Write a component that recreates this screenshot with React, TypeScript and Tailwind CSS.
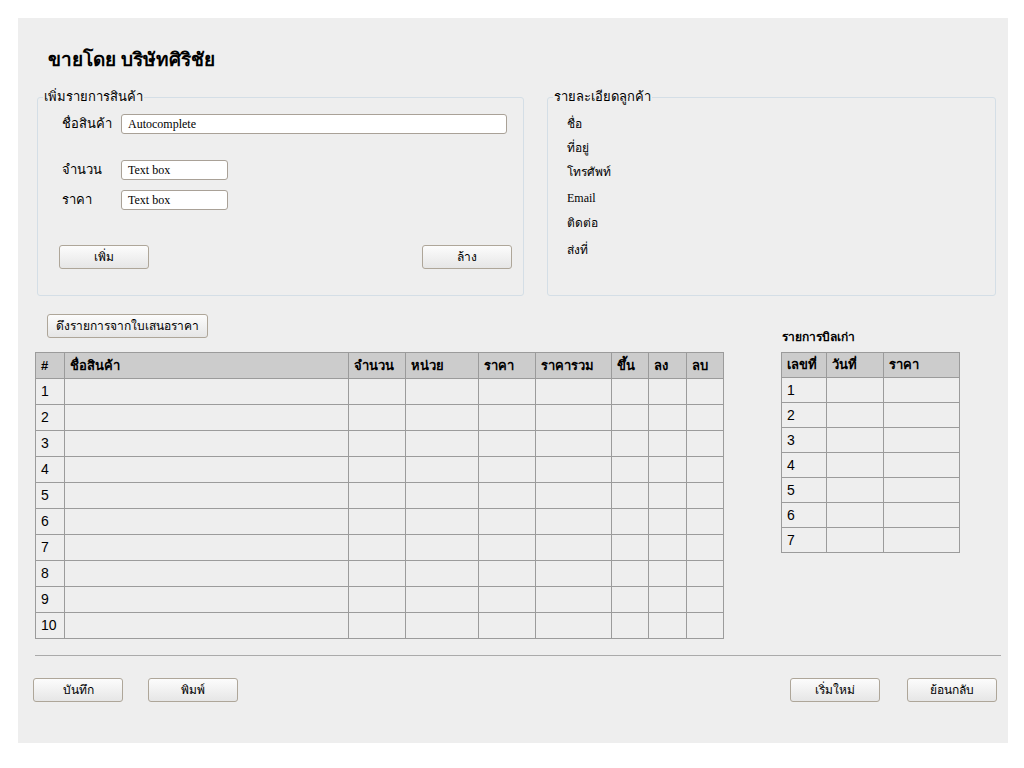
import React from 'react'

const sans = "font-['Liberation_Sans','Noto_Sans',sans-serif]"
const serif = "font-['Liberation_Serif',serif]"

const Button = ({ label, className = '' }: { label: string; className?: string }) => (
  <button
    className={`h-[24px] w-[90px] rounded-[3px] border border-[#aea699] bg-gradient-to-b from-[#fcfcfc] to-[#e6e6e6] text-[12px] text-black ${sans} ${className}`}
  >
    {label}
  </button>
)

const TextInput = ({ value, className = '' }: { value: string; className?: string }) => (
  <div
    className={`flex h-[20px] items-center rounded-[3px] border border-[#a9a197] bg-white pl-[6px] text-[12px] text-black ${serif} ${className}`}
  >
    {value}
  </div>
)

const mainCols = [
  { name: '#', w: 29 },
  { name: 'ชื่อสินค้า', w: 284 },
  { name: 'จำนวน', w: 57 },
  { name: 'หน่วย', w: 73 },
  { name: 'ราคา', w: 57 },
  { name: 'ราคารวม', w: 76 },
  { name: 'ขึ้น', w: 37 },
  { name: 'ลง', w: 38 },
  { name: 'ลบ', w: 37 },
]

const billCols = [
  { name: 'เลขที่', w: 45 },
  { name: 'วันที่', w: 57 },
  { name: 'ราคา', w: 76 },
]

const Grid = ({
  cols,
  rows,
  rowH,
}: {
  cols: { name: string; w: number }[]
  rows: number
  rowH: string
}) => (
  <table className="table-fixed border-collapse">
    <colgroup>
      {cols.map((c) => (
        <col key={c.name} style={{ width: c.w }} />
      ))}
    </colgroup>
    <thead>
      <tr className={`${rowH} bg-[#cccccc]`}>
        {cols.map((c) => (
          <th
            key={c.name}
            className={`border border-[#9b9b9b] px-[5px] text-left text-[13px] font-bold text-black ${sans}`}
          >
            {c.name}
          </th>
        ))}
      </tr>
    </thead>
    <tbody>
      {Array.from({ length: rows }, (_, i) => (
        <tr key={i} className={rowH}>
          {cols.map((c, j) => (
            <td
              key={c.name}
              className={`border border-[#9b9b9b] px-[5px] text-[14px] text-black ${sans}`}
            >
              {j === 0 ? i + 1 : ''}
            </td>
          ))}
        </tr>
      ))}
    </tbody>
  </table>
)

const customer = [
  { label: 'ชื่อ', mt: 'mt-[11px]' },
  { label: 'ที่อยู่', mt: 'mt-[8px]' },
  { label: 'โทรศัพท์', mt: 'mt-[8px]' },
  { label: 'Email', mt: 'mt-[10px]' },
  { label: 'ติดต่อ', mt: 'mt-[9px]' },
  { label: 'ส่งที่', mt: 'mt-[11px]' },
]

export default function App() {
  return (
    <div className="min-h-screen bg-white pl-[18px] pt-[18px]">
      <div className="flex h-[725px] w-[990px] flex-col bg-[#eeeeee] pt-[30px]">
        <h1 className={`ml-[30px] text-[19px] font-bold leading-[24px] text-black ${sans}`}>
          ขายโดย บริษัทศิริชัย
        </h1>

        <div className="ml-[19px] mt-[17px] flex gap-[23px]">
          <fieldset className="h-[207px] w-[487px] rounded-[3px] border border-[#d4dee6] pl-[24px] pr-[11px]">
            <legend className={`-ml-[19px] px-[1px] text-[13px] leading-[16px] text-black ${sans}`}>
              เพิ่มรายการสินค้า
            </legend>
            <div className="mt-[9px] flex items-center">
              <span className={`w-[59px] text-[13px] text-black ${sans}`}>ชื่อสินค้า</span>
              <TextInput value="Autocomplete" className="w-[386px]" />
            </div>
            <div className="mt-[26px] flex items-center">
              <span className={`w-[59px] text-[13px] text-black ${sans}`}>จำนวน</span>
              <TextInput value="Text box" className="w-[107px]" />
            </div>
            <div className="mt-[10px] flex items-center">
              <span className={`w-[59px] text-[13px] text-black ${sans}`}>ราคา</span>
              <TextInput value="Text box" className="w-[107px]" />
            </div>
            <div className="-ml-[3px] mt-[35px] flex justify-between">
              <Button label="เพิ่ม" />
              <Button label="ล้าง" />
            </div>
          </fieldset>

          <fieldset className="h-[207px] w-[449px] rounded-[3px] border border-[#d4dee6] pl-[19px]">
            <legend className={`-ml-[14px] px-[1px] text-[13px] leading-[16px] text-black ${sans}`}>
              รายละเอียดลูกค้า
            </legend>
            {customer.map((c) => (
              <div key={c.label} className={`${c.mt} h-[16px] text-[12px] leading-[16px] text-black ${serif}`}>
                {c.label}
              </div>
            ))}
          </fieldset>
        </div>

        <div className="ml-[17px] mt-[18px] flex gap-[57px]">
          <div className="flex flex-col items-start">
            <Button label="ดึงรายการจากใบเสนอราคา" className="ml-[12px] w-[161px]" />
            <div className="mt-[14px]">
              <Grid cols={mainCols} rows={10} rowH="h-[26px]" />
            </div>
          </div>
          <div className="flex flex-col pt-[15px]">
            <span className={`ml-[1px] text-[12px] font-bold leading-[16px] text-black ${sans}`}>
              รายการบิลเก่า
            </span>
            <div className="mt-[7px]">
              <Grid cols={billCols} rows={7} rowH="h-[25px]" />
            </div>
          </div>
        </div>

        <div className="ml-[17px] mt-[16px] h-px w-[966px] bg-[#aaaaaa]" />

        <div className="ml-[15px] mr-[11px] mt-[22px] flex justify-between">
          <div className="flex gap-[25px]">
            <Button label="บันทึก" />
            <Button label="พิมพ์" />
          </div>
          <div className="flex gap-[27px]">
            <Button label="เริ่มใหม่" />
            <Button label="ย้อนกลับ" />
          </div>
        </div>
      </div>
    </div>
  )
}
